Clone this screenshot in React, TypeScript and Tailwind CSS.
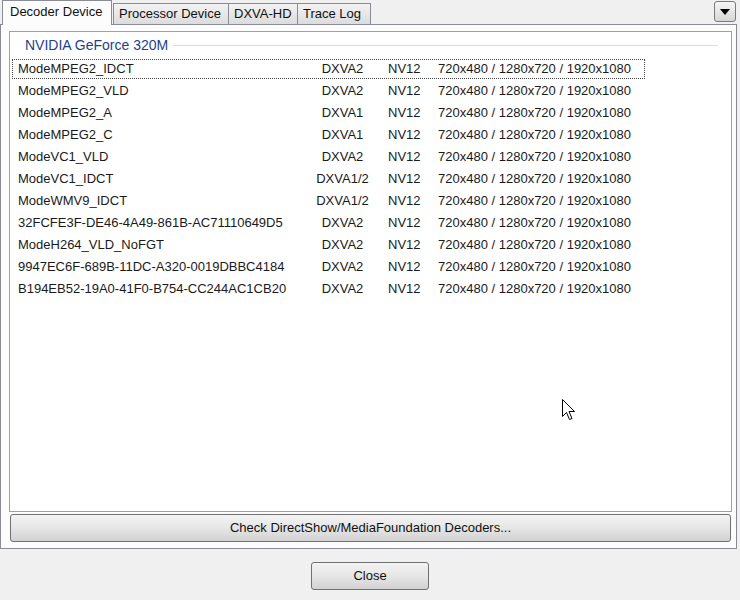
import React from "react";

const rows: [string, string][] = [
  ["ModeMPEG2_IDCT", "DXVA2"],
  ["ModeMPEG2_VLD", "DXVA2"],
  ["ModeMPEG2_A", "DXVA1"],
  ["ModeMPEG2_C", "DXVA1"],
  ["ModeVC1_VLD", "DXVA2"],
  ["ModeVC1_IDCT", "DXVA1/2"],
  ["ModeWMV9_IDCT", "DXVA1/2"],
  ["32FCFE3F-DE46-4A49-861B-AC71110649D5", "DXVA2"],
  ["ModeH264_VLD_NoFGT", "DXVA2"],
  ["9947EC6F-689B-11DC-A320-0019DBBC4184", "DXVA2"],
  ["B194EB52-19A0-41F0-B754-CC244AC1CB20", "DXVA2"],
];

function Tab({ label, w }: { label: string; w: string }) {
  return (
    <div
      className={`${w} h-[21px] border border-[#898c95] border-b-0 -ml-px first:ml-0 bg-gradient-to-b from-[#f3f3f3] to-[#dcdcdc] flex items-center pl-[5px] text-[13px] text-[#111]`}
    >
      {label}
    </div>
  );
}

export default function App() {
  return (
    <div className="w-[740px] h-[600px] bg-[#f0f0f0] relative font-['Liberation_Sans',Arial,sans-serif] text-[13px] text-[#1a1a1a] overflow-hidden select-none">
      {/* tab strip */}
      <div className="h-[25px] flex items-end pl-[2px] relative z-10 -mb-px">
        <div className="w-[110px] h-[25px] bg-[#fcfcfc] border border-[#898c95] border-b-0 flex items-center pl-[7px] pb-[2px] text-[13px] text-[#111]">
          Decoder Device
        </div>
        <div className="flex items-end pb-px ml-[1px]">
          <Tab label="Processor Device" w="w-[116px]" />
          <Tab label="DXVA-HD" w="w-[70px]" />
          <Tab label="Trace Log" w="w-[74px]" />
        </div>
        <div className="ml-auto mr-[4px] self-start mt-[1px] w-[22px] h-[21px] rounded-[3px] border border-[#7a7a7a] bg-gradient-to-b from-[#f6f6f6] to-[#d6d6d6] flex items-center justify-center">
          <svg width="10" height="6" viewBox="0 0 10 6">
            <path d="M0 0H10L5 6Z" fill="#000" />
          </svg>
        </div>
      </div>

      {/* panel */}
      <div className="w-[737px] h-[525px] border border-[#898c95] bg-[#fcfcfc] pt-[6px] pl-[8px]">
        <div className="w-[723px] h-[481px] border border-[#a0a0a0] bg-white">
          <div className="h-[25px] flex items-center pl-[15px] pr-[13px] pt-[1px]">
            <span className="text-[#1e3f8c] text-[14px] whitespace-nowrap">NVIDIA GeForce 320M</span>
            <div className="flex-1 h-px bg-[#d9dee4] ml-[5px]" />
          </div>
          <div className="pl-[2px] pt-px">
            {rows.map(([name, api], i) => (
              <div
                key={name}
                className={`w-[633px] flex items-center pl-[5px] whitespace-nowrap ${
                  i === 0
                    ? "h-[20px] my-px border border-dotted border-[#444]"
                    : "h-[22px] border border-transparent"
                }`}
              >
                <div className="w-[293px]">{name}</div>
                <div className="w-[63px] text-center">{api}</div>
                <div className="w-[14px]" />
                <div className="w-[50px]">NV12</div>
                <div>720x480 / 1280x720 / 1920x1080</div>
              </div>
            ))}
          </div>
        </div>
        <button className="mt-[2px] ml-px w-[721px] h-[28px] rounded-[3px] border border-[#707070] bg-gradient-to-b from-[#f3f3f3] via-[#e6e6e6] to-[#d2d2d2] text-[13px] text-[#111] flex items-center justify-center">
          Check DirectShow/MediaFoundation Decoders...
        </button>
      </div>

      <button className="mt-[13px] mx-auto block w-[118px] h-[28px] rounded-[3px] border border-[#707070] bg-gradient-to-b from-[#f3f3f3] via-[#e6e6e6] to-[#d2d2d2] text-[13px] text-[#111]">
        Close
      </button>

      {/* mouse cursor */}
      <svg className="absolute left-[562px] top-[399px]" width="16" height="24" viewBox="0 0 16 24">
        <path
          d="M0.5 0.5V17.5L4.5 13.5L7.5 20.5L10 19.5L7 12.5H12.5Z"
          fill="#fff"
          stroke="#000"
          strokeWidth="1"
          strokeLinejoin="miter"
        />
      </svg>
    </div>
  );
}
